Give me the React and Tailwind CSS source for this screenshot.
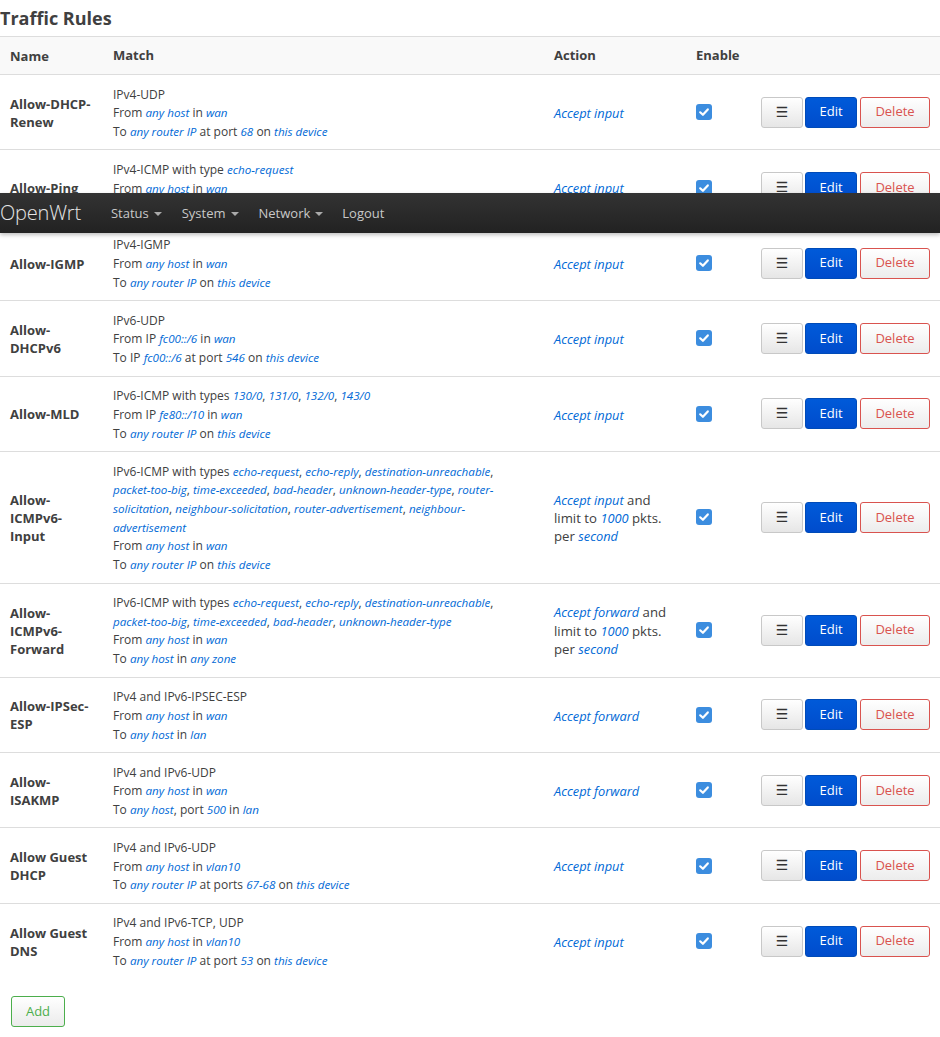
import React from 'react';

const L = ({ children }) => <em className="text-[#0069d6] italic text-[0.97em]">{children}</em>;

const rules = [
  {
    name: 'Allow-DHCP-Renew',
    match: [
      <>IPv4-UDP</>,
      <>From <L>any host</L> in <L>wan</L></>,
      <>To <L>any router IP</L> at port <L>68</L> on <L>this device</L></>,
    ],
    action: <L>Accept input</L>,
  },
  {
    name: 'Allow-Ping',
    match: [
      <>IPv4-ICMP with type <L>echo-request</L></>,
      <>From <L>any host</L> in <L>wan</L></>,
      <>To <L>any router IP</L> on <L>this device</L></>,
    ],
    action: <L>Accept input</L>,
  },
  {
    name: 'Allow-IGMP',
    match: [
      <>IPv4-IGMP</>,
      <>From <L>any host</L> in <L>wan</L></>,
      <>To <L>any router IP</L> on <L>this device</L></>,
    ],
    action: <L>Accept input</L>,
  },
  {
    name: 'Allow-DHCPv6',
    match: [
      <>IPv6-UDP</>,
      <>From IP <L>fc00::/6</L> in <L>wan</L></>,
      <>To IP <L>fc00::/6</L> at port <L>546</L> on <L>this device</L></>,
    ],
    action: <L>Accept input</L>,
  },
  {
    name: 'Allow-MLD',
    match: [
      <>IPv6-ICMP with types <L>130/0</L>, <L>131/0</L>, <L>132/0</L>, <L>143/0</L></>,
      <>From IP <L>fe80::/10</L> in <L>wan</L></>,
      <>To <L>any router IP</L> on <L>this device</L></>,
    ],
    action: <L>Accept input</L>,
  },
  {
    name: 'Allow-ICMPv6-Input',
    match: [
      <>IPv6-ICMP with types <L>echo-request</L>, <L>echo-reply</L>, <L>destination-unreachable</L>, <L>packet-too-big</L>, <L>time-exceeded</L>, <L>bad-header</L>, <L>unknown-header-type</L>, <L>router-solicitation</L>, <L>neighbour-solicitation</L>, <L>router-advertisement</L>, <L>neighbour-advertisement</L></>,
      <>From <L>any host</L> in <L>wan</L></>,
      <>To <L>any router IP</L> on <L>this device</L></>,
    ],
    action: <><L>Accept input</L> and limit to <L>1000</L> pkts. per <L>second</L></>,
  },
  {
    name: 'Allow-ICMPv6-Forward',
    match: [
      <>IPv6-ICMP with types <L>echo-request</L>, <L>echo-reply</L>, <L>destination-unreachable</L>, <L>packet-too-big</L>, <L>time-exceeded</L>, <L>bad-header</L>, <L>unknown-header-type</L></>,
      <>From <L>any host</L> in <L>wan</L></>,
      <>To <L>any host</L> in <L>any zone</L></>,
    ],
    action: <><L>Accept forward</L> and limit to <L>1000</L> pkts. per <L>second</L></>,
  },
  {
    name: 'Allow-IPSec-ESP',
    match: [
      <>IPv4 and IPv6-IPSEC-ESP</>,
      <>From <L>any host</L> in <L>wan</L></>,
      <>To <L>any host</L> in <L>lan</L></>,
    ],
    action: <L>Accept forward</L>,
  },
  {
    name: 'Allow-ISAKMP',
    match: [
      <>IPv4 and IPv6-UDP</>,
      <>From <L>any host</L> in <L>wan</L></>,
      <>To <L>any host</L>, port <L>500</L> in <L>lan</L></>,
    ],
    action: <L>Accept forward</L>,
  },
  {
    name: 'Allow Guest DHCP',
    match: [
      <>IPv4 and IPv6-UDP</>,
      <>From <L>any host</L> in <L>vlan10</L></>,
      <>To <L>any router IP</L> at ports <L>67-68</L> on <L>this device</L></>,
    ],
    action: <L>Accept input</L>,
  },
  {
    name: 'Allow Guest DNS',
    match: [
      <>IPv4 and IPv6-TCP, UDP</>,
      <>From <L>any host</L> in <L>vlan10</L></>,
      <>To <L>any router IP</L> at port <L>53</L> on <L>this device</L></>,
    ],
    action: <L>Accept input</L>,
  },
];

const Checkbox = () => (
  <span className="w-4 h-4 rounded-[3px] bg-[#3c8ddf] flex items-center justify-center">
    <svg width="12" height="12" viewBox="0 0 12 12">
      <path d="M2.2 6.3 L4.9 8.8 L9.8 3.4" fill="none" stroke="#fff" strokeWidth="2.2" strokeLinecap="round" strokeLinejoin="round" />
    </svg>
  </span>
);

const Caret = () => (
  <span className="inline-block ml-[5px] align-middle w-0 h-0 border-t-[4px] border-x-[4px] border-t-[#aaa] border-x-transparent" />
);

const Row = ({ rule }) => (
  <div className="grid grid-cols-[103px_441px_142px_64px_1fr] border-t border-[#ddd]">
    <div className="pl-[10px] pr-[10px] pt-[1px] flex items-center font-bold text-[13px] leading-[18px] text-[#404040]">
      {rule.name}
    </div>
    <div className="px-[10px] pt-[10.5px] pb-[7.8px] text-[12px] leading-[18.7px] text-[#404040]">
      {rule.match.map((m, i) => (
        <div key={i}>{m}</div>
      ))}
    </div>
    <div className="px-[10px] pt-[2px] flex items-center text-[13.2px] leading-[18.4px] text-[#404040]">
      <div>{rule.action}</div>
    </div>
    <div className="px-[10px] flex items-center">
      <Checkbox />
    </div>
    <div className="flex items-center justify-end pr-[10px]">
      <button className="w-[42px] h-[31px] rounded-[3px] border border-[#c8c8c8] bg-gradient-to-b from-white to-[#e6e6e6] text-[#333] text-[14px] font-['DejaVu_Sans',sans-serif]">
        ☰
      </button>
      <button className="ml-[2px] w-[52px] h-[31px] rounded-[3px] border border-[#004bb8] bg-gradient-to-b from-[#005ad9] to-[#004ccc] text-white text-[13px]">
        Edit
      </button>
      <button className="ml-[3px] w-[70px] h-[31px] rounded-[3px] border border-[#d9534f] bg-gradient-to-b from-white to-[#ececec] text-[#d9534f] text-[13px]">
        Delete
      </button>
    </div>
  </div>
);

export default function App() {
  return (
    <div className="relative w-[940px] min-h-[1037px] bg-white font-['Open_Sans',sans-serif] text-[#404040]">
      <h2 className="pt-[6px] mb-[6px] text-[18px] leading-[24px] font-bold text-[#404040]">Traffic Rules</h2>

      <div className="grid grid-cols-[103px_441px_142px_64px_1fr] border-t border-[#ddd] bg-[#f9f9f9] text-[13px] font-bold leading-[18px] text-[#404040]">
        <div className="pl-[10px] pt-[10px] pb-[9px]">Name</div>
        <div className="px-[10px] pt-[9px] pb-[10px]">Match</div>
        <div className="px-[10px] pt-[9px] pb-[10px]">Action</div>
        <div className="px-[10px] pt-[9px] pb-[10px]">Enable</div>
        <div />
      </div>

      {rules.map((r) => (
        <Row key={r.name} rule={r} />
      ))}

      <div className="pl-[11px] pt-[18px]">
        <button className="w-[54px] h-[31px] rounded-[3px] border border-[#4cae4c] bg-gradient-to-b from-white to-[#ebebeb] text-[#4cae4c] text-[13px]">
          Add
        </button>
      </div>

      <div className="absolute top-[193px] left-0 right-0 h-[40px] z-10 bg-gradient-to-b from-[#333] to-[#222] shadow-[0_2px_4px_rgba(0,0,0,0.25)] flex items-center">
        <span className="text-[20px] text-[#e5e5e5] font-light leading-[40px] tracking-[-0.2px]">OpenWrt</span>
        <nav className="flex items-center ml-[20px] pt-[1px] text-[13px] text-[#c8c8c8]">
          <span className="px-[10px]">Status<Caret /></span>
          <span className="px-[10px]">System<Caret /></span>
          <span className="px-[10px]">Network<Caret /></span>
          <span className="pl-[9px] pr-[10px]">Logout</span>
        </nav>
      </div>
    </div>
  );
}
